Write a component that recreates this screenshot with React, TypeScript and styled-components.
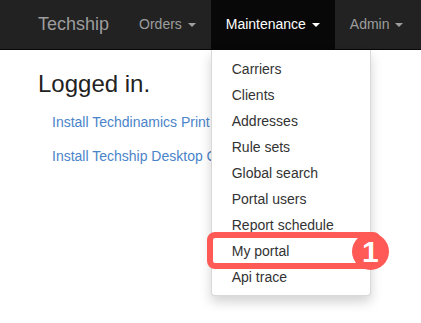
import React from 'react'
import styled, { createGlobalStyle } from 'styled-components'

const GlobalStyle = createGlobalStyle`
    html, body {
        margin: 0;
        padding: 0;
        background: #fff;
        font-family: 'Liberation Sans', Arial, Helvetica, sans-serif;
        font-size: 14px;
        color: #333;
    }
    * {
        box-sizing: border-box;
    }
`

const Page = styled.div`
    min-height: 100vh;
    background: #fff;
`

const Navbar = styled.nav`
    display: flex;
    align-items: stretch;
    height: 50px;
    padding-left: 23px;
    background: #222;
    border-bottom: 1px solid #080808;
`

const Brand = styled.a`
    padding: 0 15px;
    font-size: 18px;
    line-height: 49px;
    color: #9d9d9d;
    text-decoration: none;
`

const NavItem = styled.div<{ $active?: boolean }>`
    position: relative;
    padding: 0 15px;
    line-height: 49px;
    font-size: 14px;
    color: ${(p) => (p.$active ? '#fff' : '#9d9d9d')};
    background: ${(p) => (p.$active ? '#080808' : 'transparent')};
    white-space: nowrap;
`

const Caret = styled.span`
    display: inline-block;
    width: 0;
    height: 0;
    margin-left: 2px;
    vertical-align: middle;
    border-top: 4px solid;
    border-left: 4px solid transparent;
    border-right: 4px solid transparent;
`

const Menu = styled.ul`
    position: absolute;
    top: 100%;
    left: 0;
    z-index: 10;
    margin: 1px 0 0;
    padding: 6px 0 5px;
    min-width: 160px;
    list-style: none;
    background: #fff;
    border: 1px solid rgba(0, 0, 0, 0.15);
    border-top: 0;
    border-radius: 0 0 4px 4px;
    box-shadow: 0 6px 12px rgba(0, 0, 0, 0.175);
`

const MenuItem = styled.li`
    position: relative;
    padding: 3px 20px;
    line-height: 20px;
    font-size: 14px;
    color: #333;
    white-space: nowrap;
`

const Highlight = styled.span`
    position: absolute;
    left: -5px;
    top: -6px;
    width: 174px;
    height: 37px;
    border: 6px solid #ff5a55;
    border-radius: 8px;
`

const Badge = styled.span`
    position: absolute;
    left: 140px;
    top: -5px;
    width: 37px;
    height: 37px;
    border-radius: 50%;
    background: #ff5a55;
    color: #fff;
    font-size: 30px;
    font-weight: bold;
    line-height: 37px;
    text-align: center;
`

const Content = styled.main`
    padding: 21px 0 0 38px;
`

const Heading = styled.h2`
    margin: 0 0 15px;
    font-size: 24px;
    font-weight: 500;
    line-height: 1.1;
    color: #222;
`

const DownloadLink = styled.a`
    display: block;
    margin: 0 0 14px 14px;
    line-height: 20px;
    font-size: 14px;
    color: #4a84c9;
    text-decoration: none;
    white-space: nowrap;
`

const maintenance = [
    'Carriers',
    'Clients',
    'Addresses',
    'Rule sets',
    'Global search',
    'Portal users',
    'Report schedule',
    'My portal',
    'Api trace',
]

export default function App() {
    return (
        <Page>
            <GlobalStyle />
            <Navbar>
                <Brand>Techship</Brand>
                <NavItem>
                    Orders <Caret />
                </NavItem>
                <NavItem $active>
                    Maintenance <Caret />
                    <Menu>
                        {maintenance.map((item) => (
                            <MenuItem key={item}>
                                {item}
                                {item === 'My portal' && (
                                    <>
                                        <Highlight />
                                        <Badge>1</Badge>
                                    </>
                                )}
                            </MenuItem>
                        ))}
                    </Menu>
                </NavItem>
                <NavItem>
                    Admin <Caret />
                </NavItem>
            </Navbar>
            <Content>
                <Heading>Logged in.</Heading>
                <DownloadLink>Install Techdinamics Print Client</DownloadLink>
                <DownloadLink>Install Techship Desktop Client</DownloadLink>
            </Content>
        </Page>
    )
}
